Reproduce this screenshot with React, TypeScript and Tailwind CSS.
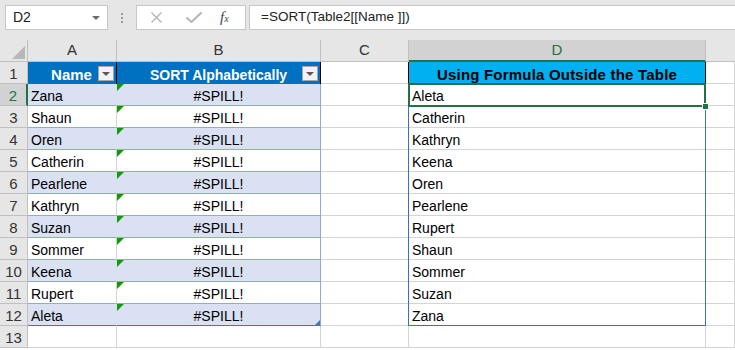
import React from 'react';

const names = ['Zana', 'Shaun', 'Oren', 'Catherin', 'Pearlene', 'Kathryn', 'Suzan', 'Sommer', 'Keena', 'Rupert', 'Aleta'];
const sorted = [...names].sort();

const grid = 'border-r border-b border-[#d4d4d4]';
const text = 'flex items-end pb-[1px] leading-[16px] text-[14px] whitespace-nowrap overflow-hidden';

const FilterButton = () => (
  <div className="absolute right-[2px] top-[4px] w-[16px] h-[15px] bg-[#f2f2f2] border border-[#a6a6a6] flex items-center justify-center">
    <div className="w-0 h-0 border-l-[4px] border-r-[4px] border-t-[4px] border-l-transparent border-r-transparent border-t-[#595959]" />
  </div>
);

const ErrorMark = () => (
  <div className="absolute left-0 top-0 w-0 h-0 border-t-[7px] border-r-[7px] border-t-[#119a11] border-r-transparent" />
);

function FormulaBar() {
  return (
    <div className="h-[40px] flex items-start pt-[5px] text-[#222]">
      <div className="ml-[5px] w-[103px] h-[25px] bg-white border border-[#c6c6c6] flex items-center justify-between pl-[7px] pr-[7px] text-[14px]">
        <span>D2</span>
        <div className="w-0 h-0 border-l-[4px] border-r-[4px] border-t-[4px] border-l-transparent border-r-transparent border-t-[#6d6d6d]" />
      </div>
      <div className="ml-[13px] mt-[8px] flex flex-col gap-[2px]">
        <div className="w-[2px] h-[2px] bg-[#9a9a9a]" />
        <div className="w-[2px] h-[2px] bg-[#9a9a9a]" />
        <div className="w-[2px] h-[2px] bg-[#9a9a9a]" />
      </div>
      <div className="ml-[13px] w-[110px] h-[25px] bg-white border border-[#c6c6c6] flex items-center pl-[12px]">
        <svg width="13" height="13" viewBox="0 0 13 13" className="ml-[1px]">
          <path d="M1.5 1.5 L11.5 11.5 M11.5 1.5 L1.5 11.5" stroke="#b3b3b3" strokeWidth="1.3" fill="none" />
        </svg>
        <svg width="18" height="13" viewBox="0 0 18 13" className="ml-[22px]">
          <path d="M1.5 6.5 L6.5 11 L16.5 1.5" stroke="#b3b3b3" strokeWidth="2" fill="none" />
        </svg>
        <span className="ml-[17px] font-['Liberation_Serif'] italic text-[15px] text-[#444] leading-none">
          f<span className="text-[10px]">x</span>
        </span>
      </div>
      <div className="ml-[3px] flex-1 h-[25px] bg-white border border-r-0 border-[#c6c6c6] flex items-center pl-[11px] text-[13.5px] text-[#222]">
        =SORT(Table2[[Name ]])
      </div>
    </div>
  );
}

export default function App() {
  const rows = Array.from({ length: 13 }, (_, i) => i + 1);

  return (
    <div className="w-[735px] h-[350px] overflow-hidden bg-[#e6e6e6] font-['Liberation_Sans',Arial,sans-serif]">
      <FormulaBar />

      <div className="relative grid grid-cols-[28px_89px_204px_88px_297px_29px] auto-rows-[22px] bg-white h-[310px] overflow-hidden">
        {/* column headers */}
        <div className="relative bg-[#e6e6e6] border-r border-b border-[#c0c0c0]">
          <svg width="13" height="13" viewBox="0 0 13 13" className="absolute right-[2px] bottom-[2px]">
            <path d="M13 0 L13 13 L0 13 Z" fill="#b8b8b8" />
          </svg>
        </div>
        {['A', 'B', 'C'].map((c) => (
          <div key={c} className="bg-[#e6e6e6] border-r border-b border-[#c0c0c0] flex items-center justify-center text-[15px] text-[#333]">
            {c}
          </div>
        ))}
        <div className="bg-[#d2d2d2] border-r border-[#c0c0c0] border-b-2 border-b-[#217346] flex items-center justify-center text-[15px] text-[#217346]">
          D
        </div>
        <div className="bg-[#e6e6e6] border-b border-[#c0c0c0]" />

        {rows.map((r) => {
          const selected = r === 2;
          const rowHeader = (
            <div
              key={`h${r}`}
              className={`${selected ? 'bg-[#d2d2d2] text-[#217346] border-r-2 border-r-[#217346] border-b border-b-[#c0c0c0]' : 'bg-[#e6e6e6] text-[#333] border-r border-b border-[#c0c0c0]'} ${text} justify-center text-[15px]`}
            >
              {r}
            </div>
          );

          if (r === 1) {
            return (
              <React.Fragment key={r}>
                {rowHeader}
                <div className={`relative bg-[#0070c0] border-r border-r-black text-white font-bold justify-center pr-[1px] text-[15px] ${text}`}>
                  Name
                  <FilterButton />
                </div>
                <div className={`relative bg-[#0070c0] border-r border-r-black text-white font-bold justify-center ${text}`}>
                  SORT Alphabetically
                  <FilterButton />
                </div>
                <div className={`${grid} border-r-black`} />
                <div className={`bg-[#00b0f0] border-r border-r-black font-bold text-black justify-center text-[15px] tracking-[0.2px] ${text}`}>
                  Using Formula Outside the Table
                </div>
                <div className={grid} />
              </React.Fragment>
            );
          }

          const idx = r - 2;
          const inTable = idx >= 0 && idx < 11;
          const banded = inTable && idx % 2 === 0;
          const last = idx === 10;
          const rowBg = banded ? 'bg-[#d9e1f2]' : 'bg-white';
          const rowBorder = last ? 'border-b-[#4472c4]' : 'border-b-[#8ea9db]';

          return (
            <React.Fragment key={r}>
              {rowHeader}
              {inTable ? (
                <>
                  <div className={`${rowBg} border-b ${rowBorder} border-r ${banded ? 'border-r-[#d9e1f2]' : 'border-r-[#d4d4d4]'} pl-[3px] text-black ${text}`}>
                    {names[idx]}
                  </div>
                  <div className={`relative ${rowBg} border-b ${rowBorder} border-r border-r-[#8ea9db] justify-center text-black ${text}`}>
                    <ErrorMark />
                    #SPILL!
                    {last && (
                      <svg width="5" height="5" viewBox="0 0 5 5" className="absolute right-0 bottom-0">
                        <path d="M5 0 L5 5 L0 5 Z" fill="#4472c4" />
                      </svg>
                    )}
                  </div>
                  <div className={grid} />
                  <div className={`${grid} pl-[3px] text-black ${text}`}>{sorted[idx]}</div>
                  <div className={grid} />
                </>
              ) : (
                <>
                  <div className={grid} />
                  <div className={grid} />
                  <div className={grid} />
                  <div className={grid} />
                  <div className={grid} />
                </>
              )}
            </React.Fragment>
          );
        })}

        {/* spill range outline */}
        <div className="absolute left-[408px] top-[43px] w-[298px] h-[243px] border border-[#3b6ec8] pointer-events-none" />
        {/* active cell selection */}
        <div className="absolute left-[408px] top-[43px] w-[298px] h-[24px] border-2 border-[#217346] pointer-events-none" />
        <div className="absolute left-[702px] top-[63px] w-[7px] h-[7px] bg-[#217346] border border-white pointer-events-none" />
      </div>
    </div>
  );
}
